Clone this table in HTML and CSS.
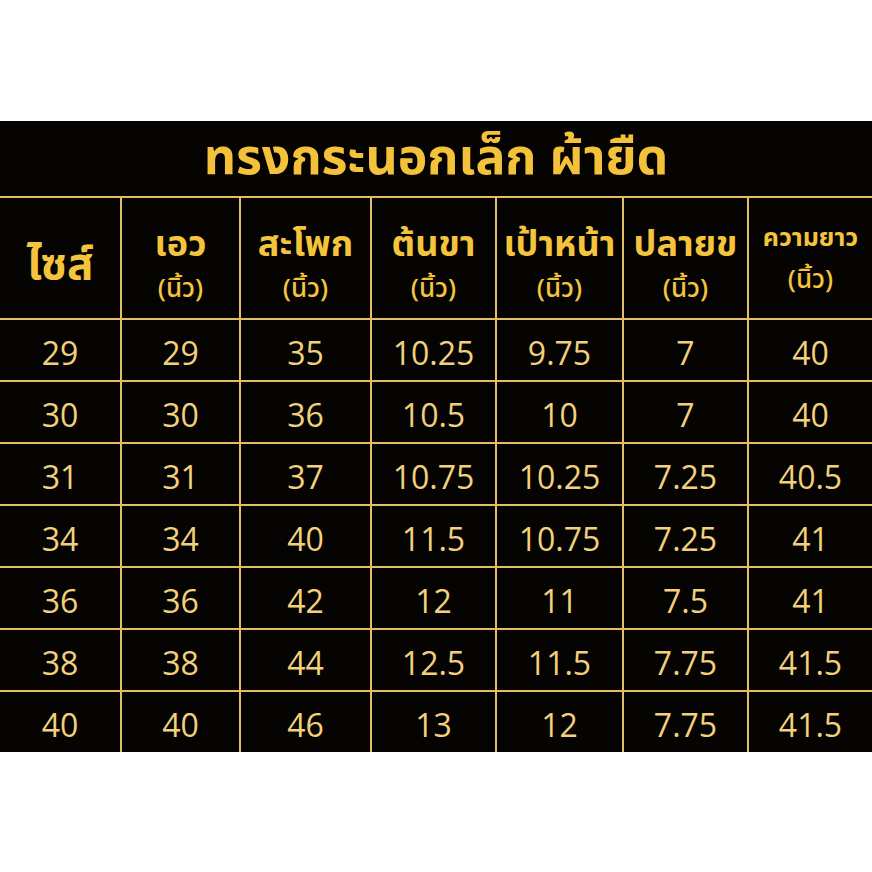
FILE: index.html
```html
<!DOCTYPE html>
<html lang="th">
<head>
<meta charset="utf-8">
<link rel="stylesheet" href="styles.css">
</head>
<body>
<div class="panel">
  <div class="title">ทรงกระนอกเล็ก ผ้ายืด</div>
  <div class="grid">
    <div class="cell head"><span class="h-big">ไซส์</span></div>
    <div class="cell head"><span class="h-main">เอว</span><span class="h-unit">(นิ้ว)</span></div>
    <div class="cell head"><span class="h-main">สะโพก</span><span class="h-unit">(นิ้ว)</span></div>
    <div class="cell head"><span class="h-main">ต้นขา</span><span class="h-unit">(นิ้ว)</span></div>
    <div class="cell head"><span class="h-main">เป้าหน้า</span><span class="h-unit">(นิ้ว)</span></div>
    <div class="cell head"><span class="h-main">ปลายข</span><span class="h-unit">(นิ้ว)</span></div>
    <div class="cell head"><span class="h-small">ความยาว</span><span class="h-unit">(นิ้ว)</span></div>

    <div class="cell num">29</div><div class="cell num">29</div><div class="cell num">35</div><div class="cell num">10.25</div><div class="cell num">9.75</div><div class="cell num">7</div><div class="cell num">40</div>
    <div class="cell num">30</div><div class="cell num">30</div><div class="cell num">36</div><div class="cell num">10.5</div><div class="cell num">10</div><div class="cell num">7</div><div class="cell num">40</div>
    <div class="cell num">31</div><div class="cell num">31</div><div class="cell num">37</div><div class="cell num">10.75</div><div class="cell num">10.25</div><div class="cell num">7.25</div><div class="cell num">40.5</div>
    <div class="cell num">34</div><div class="cell num">34</div><div class="cell num">40</div><div class="cell num">11.5</div><div class="cell num">10.75</div><div class="cell num">7.25</div><div class="cell num">41</div>
    <div class="cell num">36</div><div class="cell num">36</div><div class="cell num">42</div><div class="cell num">12</div><div class="cell num">11</div><div class="cell num">7.5</div><div class="cell num">41</div>
    <div class="cell num">38</div><div class="cell num">38</div><div class="cell num">44</div><div class="cell num">12.5</div><div class="cell num">11.5</div><div class="cell num">7.75</div><div class="cell num">41.5</div>
    <div class="cell num">40</div><div class="cell num">40</div><div class="cell num">46</div><div class="cell num">13</div><div class="cell num">12</div><div class="cell num">7.75</div><div class="cell num">41.5</div>
  </div>
</div>
</body>
</html>
```

FILE: styles.css
```css
html, body {
  margin: 0;
  padding: 0;
  background: #ffffff;
}
body {
  width: 872px;
  height: 872px;
  overflow: hidden;
  font-family: "Noto Sans Thai", "Noto Sans", "Open Sans", sans-serif;
}
.panel {
  margin-top: 121px;
  height: 631px;
  background: #050403;
  overflow: hidden;
  display: flex;
  flex-direction: column;
}
.title {
  height: 77px;
  display: flex;
  align-items: center;
  justify-content: center;
  color: #f4c23a;
  font-size: 50px;
  font-weight: 700;
  line-height: 1;
}
.grid {
  display: grid;
  grid-template-columns: 120px 117px 129px 123px 125px 123px 1fr;
  grid-template-rows: 120px repeat(7, 60px);
  gap: 2px;
  background: #e3be68;
  border-top: 2px solid #e3be68;
}
.cell {
  background: #050403;
  display: flex;
  align-items: center;
  justify-content: center;
}
.head {
  flex-direction: column;
  color: #f3c43c;
  font-weight: 700;
  line-height: 1.3;
  padding-top: 12px;
  box-sizing: border-box;
}
.h-big {
  font-size: 44px;
  padding-top: 4px;
}
.h-main {
  font-size: 36px;
}
.h-small {
  font-size: 25px;
  margin-top: -8px;
  margin-bottom: 6px;
}
.h-unit {
  font-size: 26px;
  font-weight: 500;
  margin-top: 4px;
}
.num {
  font-family: "Open Sans", "Noto Sans", sans-serif;
  font-size: 32px;
  color: #f2d07c;
  line-height: 1;
  padding-top: 5px;
  box-sizing: border-box;
}
```
